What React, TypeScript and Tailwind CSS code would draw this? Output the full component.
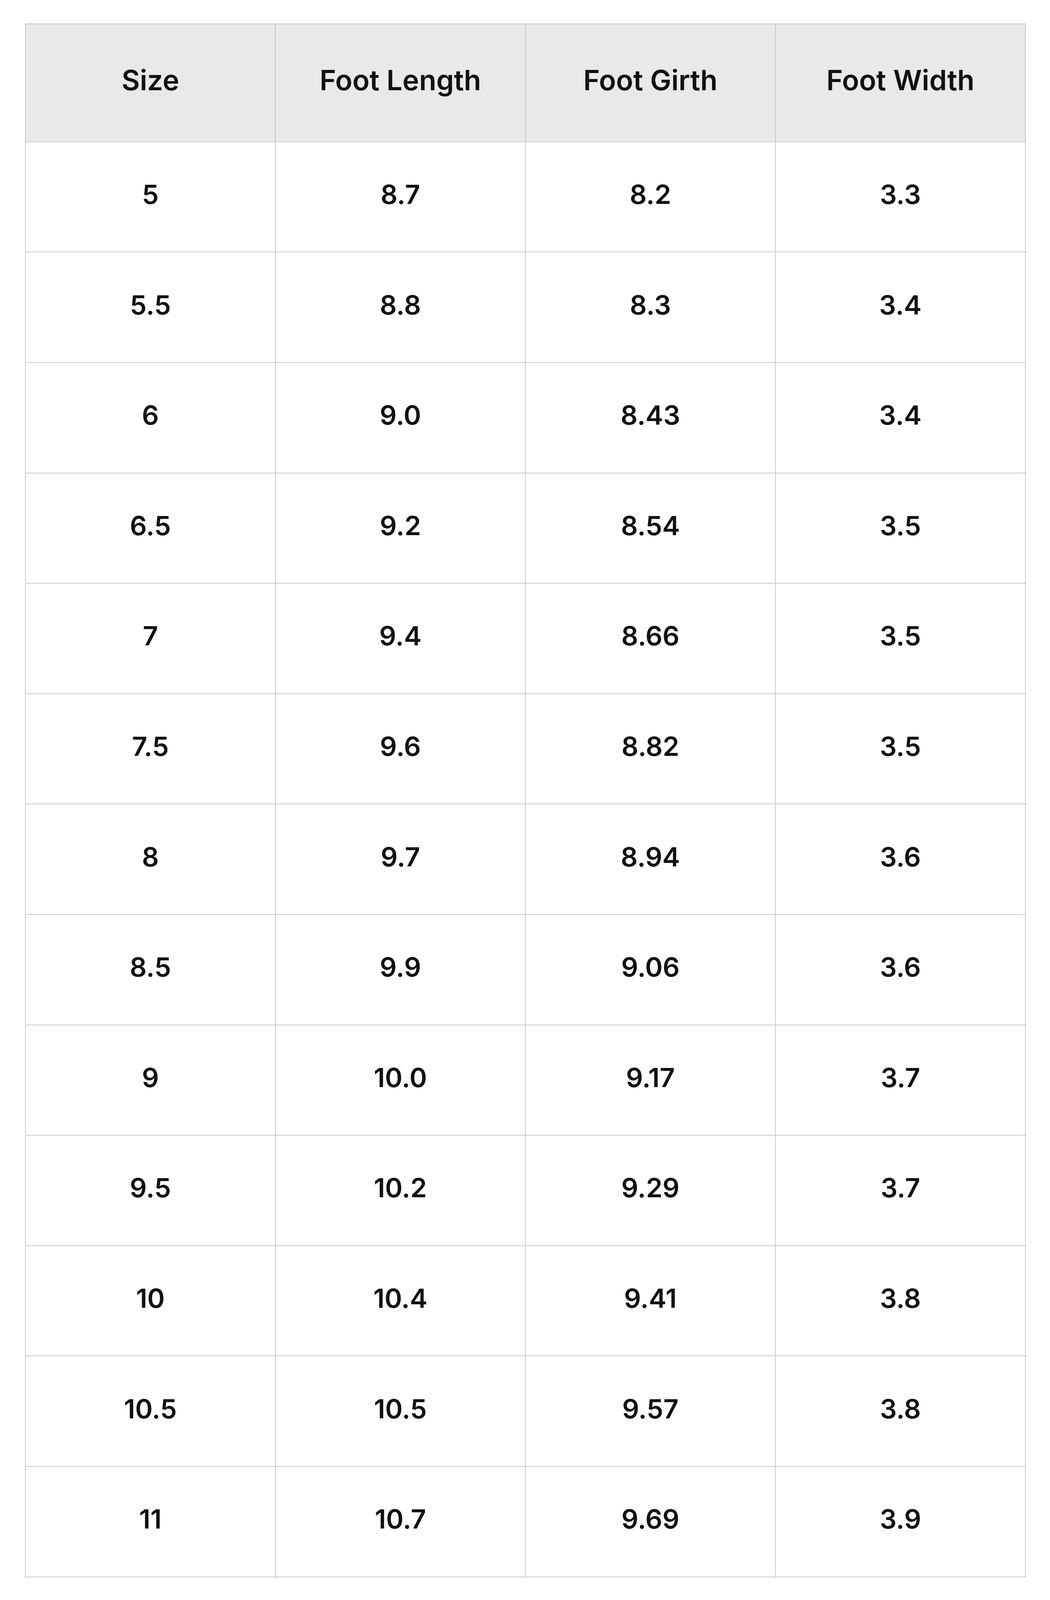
import React from "react";

const headers = ["Size", "Foot Length", "Foot Girth", "Foot Width"];
const rows: string[][] = [
  ["5", "8.7", "8.2", "3.3"],
  ["5.5", "8.8", "8.3", "3.4"],
  ["6", "9.0", "8.43", "3.4"],
  ["6.5", "9.2", "8.54", "3.5"],
  ["7", "9.4", "8.66", "3.5"],
  ["7.5", "9.6", "8.82", "3.5"],
  ["8", "9.7", "8.94", "3.6"],
  ["8.5", "9.9", "9.06", "3.6"],
  ["9", "10.0", "9.17", "3.7"],
  ["9.5", "10.2", "9.29", "3.7"],
  ["10", "10.4", "9.41", "3.8"],
  ["10.5", "10.5", "9.57", "3.8"],
  ["11", "10.7", "9.69", "3.9"],
];

export default function App() {
  return (
    <div className="w-full h-screen flex flex-col bg-white pt-[1.472vh] pl-[64px] pb-[1.426vh] font-['Inter',sans-serif] text-[#111111]">
      <div className="flex-1 min-h-0 grid grid-cols-4 grid-rows-[320fr_repeat(13,300fr)] w-[2562px] border-l-2 border-t-2 border-[#c8c8c8]">
        {headers.map((h) => (
          <div
            key={h}
            className="min-h-0 flex items-center justify-center pb-[14px] bg-[#e9e9e9] border-r-2 border-b-2 border-[#c8c8c8] text-[72px] font-semibold leading-none"
          >
            {h}
          </div>
        ))}
        {rows.map((r, i) =>
          r.map((c, j) => (
            <div
              key={`${i}-${j}`}
              className="min-h-0 flex items-center justify-center pb-[14px] bg-white border-r-2 border-b-2 border-[#c8c8c8] text-[68px] font-semibold leading-none"
            >
              {c}
            </div>
          ))
        )}
      </div>
    </div>
  );
}
